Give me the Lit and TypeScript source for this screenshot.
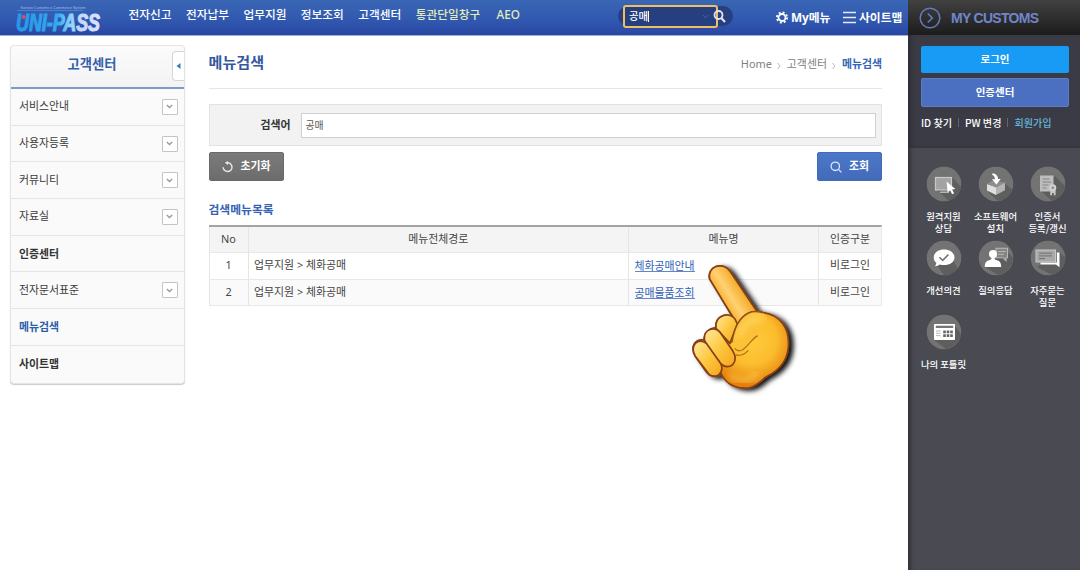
import { LitElement, html, css, svg } from "lit";
import { customElement } from "lit/decorators.js";
import { classMap } from "lit/directives/class-map.js";

const NAV = ["전자신고", "전자납부", "업무지원", "정보조회", "고객센터"];
const SIDE = [
  { label: "서비스안내", more: true },
  { label: "사용자등록", more: true },
  { label: "커뮤니티", more: true },
  { label: "자료실", more: true },
  { label: "인증센터", bold: true },
  { label: "전자문서표준", more: true },
  { label: "메뉴검색", bold: true, active: true },
  { label: "사이트맵", bold: true },
];
const ROWS = [
  { no: 1, path: "업무지원 > 체화공매", name: "체화공매안내", auth: "비로그인" },
  { no: 2, path: "업무지원 > 체화공매", name: "공매물품조회", auth: "비로그인" },
];

const GLYPHS = {
  remote: svg`<path d="M10 23L27 12L36 22A18 18 0 0 1 23 35Z" fill="#5e5e5f"/>
    <rect x="9.5" y="11.5" width="16" height="12.5" fill="#a3a3a3" stroke="#c9c9c9" stroke-width="1.2"/>
    <path d="M14 26.3h9" stroke="#b5b5b5" stroke-width="1.4"/>
    <path d="M20.5 15.5l1.2 11 2.4-2.2 2 4 2-1-2-3.8 3.3-.4z" fill="#fff"/>`,
  install: svg`<path d="M10 26L26 17L35 24A18 18 0 0 1 20 35Z" fill="#5e5e5f"/>
    <path d="M9 18l9 3.2V29l-9-4.4z" fill="#dedede"/><path d="M27 16.5l-9 4.7V29l9-4.8z" fill="#b4b4b4"/>
    <path d="M9 18l5.2-3.2 12.8 1.7-9 4.7z" fill="#8f8f8f"/>
    <path d="M14.5 7.3c3.400.4 5.500 2.400 5.600 5.700h2.600L18.400 18.500l-4.400-5.200h2.900c0-2.400-.9-3.800-2.700-4.300z" fill="#fff"/>`,
  cert: svg`<path d="M11 25L25 10L35 20A18 18 0 0 1 22 35Z" fill="#5e5e5f"/>
    <rect x="10" y="9.5" width="13.5" height="16" fill="#bdbdbd"/>
    <path d="M12.5 13h7M12.5 16h8.5M12.5 19h6M12.5 22h4" stroke="#848484" stroke-width="1"/>
    <path d="M20.2 24v5.3h1.9V27h1.7v2.3h1.8V24z" fill="#c8c8c8"/>
    <circle cx="22.8" cy="21.7" r="3.5" fill="#d0d0d0"/><circle cx="22.8" cy="21.7" r="1.3" fill="#8a8a8a"/>`,
  opinion: svg`<path d="M11 25L27 20L32 29A18 18 0 0 1 18 35Z" fill="#5e5e5f"/>
    <path d="M18 9.5c5.9 0 10.5 3.4 10.5 7.9S23.9 25 18 25c-1.600 0-3-.2-4.300-.6-1.200 1-2.700 1.700-4.800 1.800.9-1 1.400-2.100 1.400-3.400-1.700-1.400-2.600-3.200-2.600-5.400C7.700 12.900 12.100 9.500 18 9.500z" fill="#fff"/>
    <path d="M13.400 17.200l3.300 3.200 5.700-5.800" stroke="#777" stroke-width="1.600" fill="none"/>`,
  qna: svg`<path d="M7 27L29 11L35 18A18 18 0 0 1 20 35Z" fill="#5e5e5f"/>
    <path d="M18 8.300h11.500v9.400H28v3l-3-3h-7z" fill="#858585" stroke="#b8b8b8" stroke-width="1.100"/>
    <path d="M20 11.500h7.500M20 14.300h6" stroke="#bbb" stroke-width=".9"/>
    <circle cx="15" cy="14" r="4" fill="#fff"/>
    <path d="M6.800 27c0-4.300 1.400-6 5-6.900 1.200-.3 1.700-1 1.700-2.800h3c0 1.800.5 2.500 1.800 2.800 3.500.9 4.900 2.600 4.900 6.900z" fill="#fff"/>`,
  faq: svg`<path d="M7 27L29 12L36 18A18 18 0 0 1 22 35Z" fill="#5e5e5f"/>
    <path d="M26.800 12.500h2.700v14.800l-3.500-2.800H10.500v-2h16.300z" fill="#fff"/>
    <rect x="6" y="10" width="19.500" height="12" fill="#a8a8a8" stroke="#c9c9c9"/>
    <path d="M9 13.200h13M9 15.900h13M9 18.600h6" stroke="#6e6e6e" stroke-width="1"/>`,
  portlet: svg`<path d="M8 26L29 12L35 20A18 18 0 0 1 20 35Z" fill="#5e5e5f"/>
    <rect x="8" y="10" width="21" height="16" rx=".8" fill="#fff"/>
    <rect x="9.800" y="11.700" width="17.400" height="2.300" fill="#777"/>
    <path d="M10 17h4.500M10 19.300h4.500M10 21.600h4.500" stroke="#aaa" stroke-width=".9"/>
    <path d="M17.200 17.800h9.600M17.200 21.700h9.600" stroke="#666" stroke-width="2.700" stroke-dasharray="2.600 .9"/>`,
};
const QUICK = [
  { lines: ["원격지원", "상담"], glyph: GLYPHS.remote },
  { lines: ["소프트웨어", "설치"], glyph: GLYPHS.install },
  { lines: ["인증서", "등록/갱신"], glyph: GLYPHS.cert },
  { lines: ["개선의견"], glyph: GLYPHS.opinion },
  { lines: ["질의응답"], glyph: GLYPHS.qna },
  { lines: ["자주묻는", "질문"], glyph: GLYPHS.faq },
  { lines: ["나의 포틀릿"], glyph: GLYPHS.portlet },
];

@customElement("app-root")
export class AppRoot extends LitElement {
  static styles = css`
    :host { display: block; width: 1080px; height: 570px; overflow: hidden; background: #fff;
      font-family: "Noto Sans", "Noto Sans CJK KR", sans-serif; font-size: 10.9px; color: #444; line-height: 1; }
    * { box-sizing: border-box; }
    svg { display: block; flex: none; }
    .page { display: grid; grid-template-columns: 908px 172px; height: 570px; position: relative; }
    .left { display: flex; flex-direction: column; }
    .top { height: 36px; display: flex; background: linear-gradient(#3a66b5, #3159b0 55%, #2b4ca7 88%, #2745a0); border-bottom: 1px solid #9fb2dc; color: #fff; padding-left: 13px; }
    .logo { width: 115px; }
    .nav { display: flex; gap: 14.4px; padding: 8px 0 0 .6px; width: 490px; font-size: 11.7px; font-weight: 500; line-height: 13px; white-space: nowrap; }
    .nav .hot { color: #e2ecb8; }
    .nav .wide { width: 66.600px; }
    .pill { width: 115px; height: 20px; margin-top: 6px; border-radius: 10px; background: #293f7d; display: flex; align-items: center; }
    .field { width: 95px; height: 23px; margin-left: 5px; flex: none; border: 2px solid #efbd62; border-radius: 3px; background: #263f7e; display: flex; align-items: center; font-size: 10.4px; padding: 0 7px 0 4px; font-weight: 500; }
    .caret { width: 1px; height: 11px; background: #fff; margin-right: auto; }
    .lens { margin-left: -6px; }
    .tools { display: flex; margin-left: 43px; padding-top: 11px; font-size: 11.8px; font-weight: 700; line-height: 13px; white-space: nowrap; }
    .tools svg { margin-right: 3px; }
    .sitemap { margin-left: 13px; display: flex; }
    .my { display: flex; width: 54px; letter-spacing: -.1px; }
    .body { display: flex; padding: 9px 0 0 9.500px; }
    .side { width: 175px; height: 339px; border: 1px solid #e4e4e4; border-radius: 4px; box-shadow: 0 1px 1px #ccc; background: #fafafa; }
    .sidehead { height: 43px; border-bottom: 2px solid #7d9bc9; background: linear-gradient(#fbfbfb, #f3f3f3); border-radius: 4px 4px 0 0; display: flex; justify-content: flex-end; }
    .sidehead b { color: #3560a9; font-size: 13.3px; font-weight: 700; width: 49px; margin-right: 55px; white-space: nowrap; line-height: 37px; }
    .fold { width: 12px; height: 30px; margin-top: 5px; border: 1px solid #d5d5d5; border-right: 0; border-radius: 4px 0 0 4px; background: #fff; display: grid; place-items: center; }
    .item { height: 36.7px; border-bottom: 1px solid #e5e5e5; display: flex; align-items: center; justify-content: space-between; padding: 0 6px 0 8.500px; font-weight: 400; color: #3b3b3b; }
    .item:last-child { border: 0; }
    .bold { font-weight: 700; color: #333; }
    .bold span { padding-top: 1px; }
    .active { color: #2c5fa8; }
    .box { width: 16px; height: 16px; border: 1px solid #c4c4c4; background: #fff; display: grid; place-items: center; border-radius: 1px; }
    .main { width: 673.500px; margin-left: 24px; }
    .title { height: 44px; border-bottom: 1px solid #e6e6e6; display: flex; justify-content: space-between; padding-top: 8px; }
    .title h1 { margin: 0; font-size: 15.1px; line-height: 19px; color: #3457a0; font-weight: 700; }
    .crumbs { display: flex; font-size: 10.900px; line-height: 22px; color: #808080; gap: 5.500px; align-items: flex-start; }
    .crumbs svg { margin-top: 9px; }
    .crumbs b { color: #3464b6; }
    .search { margin-top: 15px; height: 42px; border: 1px solid #e2e2e2; background: #f2f2f2; display: flex; align-items: center; padding: 0 5px 0 51px; gap: 10px; }
    .search b { font-size: 10.900px; color: #333; white-space: nowrap; }
    .input { flex: 1; height: 25px; background: #fff; border: 1px solid #d0d0d0; padding-left: 4px; font-size: 9.800px; line-height: 23px; color: #555; }
    .actions { margin-top: 6px; display: flex; justify-content: space-between; }
    .btn { height: 29px; border-radius: 2px; color: #fff; font-weight: 700; font-size: 10.900px; display: flex; align-items: center; }
    .reset { width: 75px; padding-left: 12px; gap: 8px; background: linear-gradient(#7b7b7b, #6c6c6c); border: 1px solid #6a6a6a; }
    .find { width: 65px; padding-left: 12px; gap: 7px; background: linear-gradient(#4c78c9, #426bb9); border: 1px solid #426bb9; }
    h2 { margin: 20px 0 0; height: 24px; font-size: 11.8px; line-height: 17px; color: #3663b5; }
    .table { border-top: 2px solid #a4a4a4; border-right: 1px solid #e9e9e9; }
    .row { display: grid; grid-template-columns: 39px 380.500px 190px 63px; height: 26.700px; border-bottom: 1px solid #e8e8e8; }
    .row > span { display: flex; align-items: center; justify-content: center; border-left: 1px solid #e5e5e5; white-space: nowrap; }
    .row > .start { justify-content: flex-start; padding-left: 5.500px; }
    .head { background: #f4f4f4; height: 26px; }
    .alt { background: #fafafa; }
    .link { color: #2f5fb8; border-bottom: 1px solid #6286c8; line-height: 11px; font-size: 10.900px; }
    .right { background: #4a4a53; box-shadow: inset 5px 0 5px -3px #2b2b31; color: #fff; }
    .rhead { height: 35px; background: linear-gradient(#414141, #1c1c1c); display: flex; align-items: center; gap: 10px; padding-left: 11px; color: #6f86cb; font: bold 14px "Liberation Sans", sans-serif; letter-spacing: -.7px; }
    .account { height: 113px; padding: 11px 11px 0 13px; background: #3b3b45; border-bottom: 1px solid #35353d; box-shadow: inset 5px 0 5px -3px #29292f; }
    .login, .center { height: 27px; background: #189bf4; border-radius: 2px; display: grid; place-items: center; font-weight: 700; font-size: 10.500px; }
    .center { height: 29px; margin-top: 5px; background: #4c70c1; border: 1px solid #5b7dc9; padding-bottom: 1px; }
    .links { margin-top: 9.500px; display: flex; align-items: center; font: 500 10.1px/12px "Noto Sans CJK KR", sans-serif; white-space: nowrap; }
    .links i { width: 1px; height: 9px; background: #64646c; margin: 0 6px; }
    .links .join { color: #65b6dc; }
    .quick { display: grid; grid-template-columns: repeat(3, 52px); grid-auto-rows: 74px; padding: 18px 0 0 9.500px; }
    .tile { display: flex; flex-direction: column; align-items: center; font: 500 9.4px/12px "Noto Sans CJK KR", sans-serif; white-space: nowrap; text-align: center; }
    .tile svg { margin-bottom: 7.500px; }
    .hand { position: absolute; left: 680px; top: 250px; }
  `;

  private hand() {
    return html`<svg class="hand" width="130" height="150" viewBox="0 0 390 450">
      <defs>
        <linearGradient id="skin" x1="0" y1="0" x2="1" y2="1">
          <stop offset="0" stop-color="#ffe9a0" /><stop offset=".5" stop-color="#fdc840" /><stop offset="1" stop-color="#f5a41d" />
        </linearGradient>
        <radialGradient id="palm" gradientUnits="userSpaceOnUse" cx="215" cy="270" r="135">
          <stop offset="0" stop-color="#ffcb3a" /><stop offset=".55" stop-color="#fbbd2e" /><stop offset="1" stop-color="#e6800f" />
        </radialGradient>
        <linearGradient id="index" gradientUnits="userSpaceOnUse" x1="125" y1="145" x2="180" y2="110">
          <stop offset="0" stop-color="#f9b53a" /><stop offset=".4" stop-color="#ffd272" /><stop offset="1" stop-color="#f5aa2a" />
        </linearGradient>
        <filter id="shade" x="-20%" y="-20%" width="150%" height="150%">
          <feDropShadow dx="13" dy="6" stdDeviation="8" flood-color="#000" flood-opacity=".95" />
        </filter>
        <filter id="soft" x="-30%" y="-30%" width="160%" height="160%"><feGaussianBlur stdDeviation="9" /></filter>
      </defs>
      <path d="M120 365C133 395 158 417 202 414C230 412 242 390 262 379C298 360 322 333 325 291C330 235 300 194 249 188L230 183L150 64C128 32 80 50 89 87L165 205C137 184 105 200 108 233C86 235 73 250 72 270C43 266 30 291 46 319L77 363C89 381 104 382 122 376Z" fill="url(#palm)" stroke="#854017" stroke-width="5" filter="url(#shade)" />
      <path d="M165 206L89 87C80 50 128 32 150 64L230 183L200 225Z" fill="url(#index)" />
      <path d="M170 222L89 87C80 50 128 32 150 64L230 183" fill="none" stroke="#854017" stroke-width="5" stroke-linejoin="round" />
      <g stroke="#854017" stroke-width="5" stroke-linejoin="round" stroke-linecap="round">
        <path d="M108 235C103 198 145 183 165 207L172 222L150 280Z" fill="url(#skin)" />
        <path d="M73 269C71 237 103 227 121 248L158 302C181 337 147 365 122 341L83 289Z" fill="url(#skin)" />
        <path d="M46 319C28 286 53 261 80 281L123 342C132 365 114 388 88 374Z" fill="url(#skin)" />
      </g>
      <path d="M155 278C161 241 177 201 207 188C218 183 233 184 249 188L262 205L232 258C218 263 207 287 187 300L168 300Z" fill="#fcc136" />
      <path d="M178 255C188 225 208 207 240 205" fill="none" stroke="#ffdc6a" stroke-width="18" stroke-linecap="round" opacity=".7" filter="url(#soft)" />
      <path d="M150 375C170 400 205 395 235 370" fill="none" stroke="#ffd450" stroke-width="18" opacity=".6" filter="url(#soft)" />
      <path d="M155 278C161 241 177 201 207 188C218 183 233 184 249 188" fill="none" stroke="#91501a" stroke-width="5" />
      <path d="M232 258C218 263 207 287 187 300C178 304 170 302 165 296M204 302C193 314 181 318 169 315" fill="none" stroke="#b8741c" stroke-width="4" stroke-linecap="round" />
    </svg>`;
  }

  render() {
    return html`<div class="page">
      <div class="left">
        <header class="top">
          <svg class="logo" width="115" height="35" viewBox="0 0 115 35">
            <defs><linearGradient id="lg" x1="0" x2="1"><stop offset="0" stop-color="#2597e8" /><stop offset=".5" stop-color="#35aaf0" /><stop offset=".64" stop-color="#8bd4fb" /><stop offset=".78" stop-color="#c8d8fa" /><stop offset="1" stop-color="#dce3fb" /></linearGradient></defs>
            <text x="7.500" y="8.500" font-family="Liberation Sans" font-size="4" fill="#a8bce6" textLength="65" lengthAdjust="spacingAndGlyphs">Korean Customs e-Commerce System</text>
            <path d="M4 10.500h66" stroke="#3f9be0" stroke-width=".7" />
            <text x="3" y="31" font-family="Liberation Sans" font-weight="700" font-style="italic" font-size="23" fill="url(#lg)" stroke="url(#lg)" stroke-width="1.100" textLength="84" lengthAdjust="spacingAndGlyphs">UNI-PASS</text>
            <circle cx="10.500" cy="17" r="2" fill="#dc4a68" />
          </svg>
          <nav class="nav">${NAV.map((n) => html`<span>${n}</span>`)}<span class="hot wide">통관단일창구</span><span class="hot">AEO</span></nav>
          <div class="pill">
            <div class="field">공매<span class="caret"></span><svg width="7" height="5" viewBox="0 0 7 5"><path d="M1 1l2.500 3L6 1" fill="none" stroke="#46639f" /></svg></div>
            <svg class="lens" width="15" height="15" viewBox="0 0 15 15" fill="none" stroke="#dde4f4"><circle cx="6.500" cy="6" r="4" stroke-width="1.800" /><path d="M9.300 9l3.700 4" stroke-width="2.200" /></svg>
          </div>
          <div class="tools">
            <span class="my"><svg width="12" height="13" viewBox="0 0 12 13"><circle cx="6" cy="6.500" r="3.500" fill="none" stroke="#fff" stroke-width="1.800" /><circle cx="6" cy="6.500" r="5.100" fill="none" stroke="#fff" stroke-width="1.800" stroke-dasharray="2 2.005" /></svg>My메뉴</span>
            <span class="sitemap"><svg width="13" height="13" viewBox="0 0 13 13"><path d="M0 1.500h13M0 6.500h13M0 11.500h13" stroke="#e6ebf7" stroke-width="1.400" /></svg>사이트맵</span>
          </div>
        </header>
        <div class="body">
          <aside class="side">
            <div class="sidehead"><b>고객센터</b><span class="fold"><svg width="5" height="6" viewBox="0 0 5 6"><path d="M4.500 0v6L.5 3z" fill="#3a7bc0" /></svg></span></div>
            ${SIDE.map((s) => html`<div class=${classMap({ item: true, bold: !!s.bold, active: !!s.active })}><span>${s.label}</span>${s.more ? html`<span class="box"><svg width="7" height="5" viewBox="0 0 7 5"><path d="M.8 1l2.700 2.500L6.200 1" fill="none" stroke="#999" stroke-width="1.300" /></svg></span>` : ""}</div>`)}
          </aside>
          <main class="main">
            <div class="title"><h1>메뉴검색</h1>
              <div class="crumbs"><span>Home</span><svg width="4" height="8" viewBox="0 0 4 8"><path d="M.5 1l2.500 3L.5 7" fill="none" stroke="#bbb" /></svg><span>고객센터</span><svg width="4" height="8" viewBox="0 0 4 8"><path d="M.5 1l2.500 3L.5 7" fill="none" stroke="#bbb" /></svg><b>메뉴검색</b></div>
            </div>
            <div class="search"><b>검색어</b><div class="input">공매</div></div>
            <div class="actions">
              <div class="btn reset"><svg width="11" height="12" viewBox="0 0 11 12"><path d="M5.500 1.800A4.400 4.400 0 1 1 1.200 6.200" fill="none" stroke="#e5e5e5" stroke-width="1.500" /><path d="M6 0v4L2.700 1.800z" fill="#e5e5e5" /></svg>초기화</div>
              <div class="btn find"><svg width="12" height="12" viewBox="0 0 12 12" fill="none" stroke="#dce6fa" stroke-width="1.300"><circle cx="5.300" cy="5.300" r="4.200" /><path d="M8.400 8.400l3 3" /></svg>조회</div>
            </div>
            <h2>검색메뉴목록</h2>
            <div class="table">
              <div class="row head"><span>No</span><span>메뉴전체경로</span><span>메뉴명</span><span>인증구분</span></div>
              ${ROWS.map((r, i) => html`<div class=${classMap({ row: true, alt: i % 2 === 1 })}><span>${r.no}</span><span class="start">${r.path}</span><span class="start"><span class="link">${r.name}</span></span><span>${r.auth}</span></div>`)}
            </div>
          </main>
        </div>
      </div>
      <section class="right">
        <div class="rhead"><svg width="22" height="22" viewBox="0 0 22 22" fill="none" stroke="#6379b8"><circle cx="11" cy="11" r="9.800" stroke-width="1.500" /><path d="M8.800 6.500l4.500 4.500-4.500 4.500" stroke-width="1.700" /></svg>MY CUSTOMS</div>
        <div class="account">
          <div class="login">로그인</div><div class="center">인증센터</div>
          <div class="links"><span>ID 찾기</span><i></i><span>PW 변경</span><i></i><span class="join">회원가입</span></div>
        </div>
        <div class="quick">${QUICK.map((q) => html`<div class="tile"><svg width="36" height="36" viewBox="0 0 36 36"><defs><clipPath id="disc"><circle cx="18" cy="18" r="17.500" /></clipPath></defs><g clip-path="url(#disc)"><circle cx="18" cy="18" r="17.500" fill="#737374" />${q.glyph}</g></svg>${q.lines.map((l) => html`<span>${l}</span>`)}</div>`)}</div>
      </section>
      ${this.hand()}
    </div>`;
  }
}
